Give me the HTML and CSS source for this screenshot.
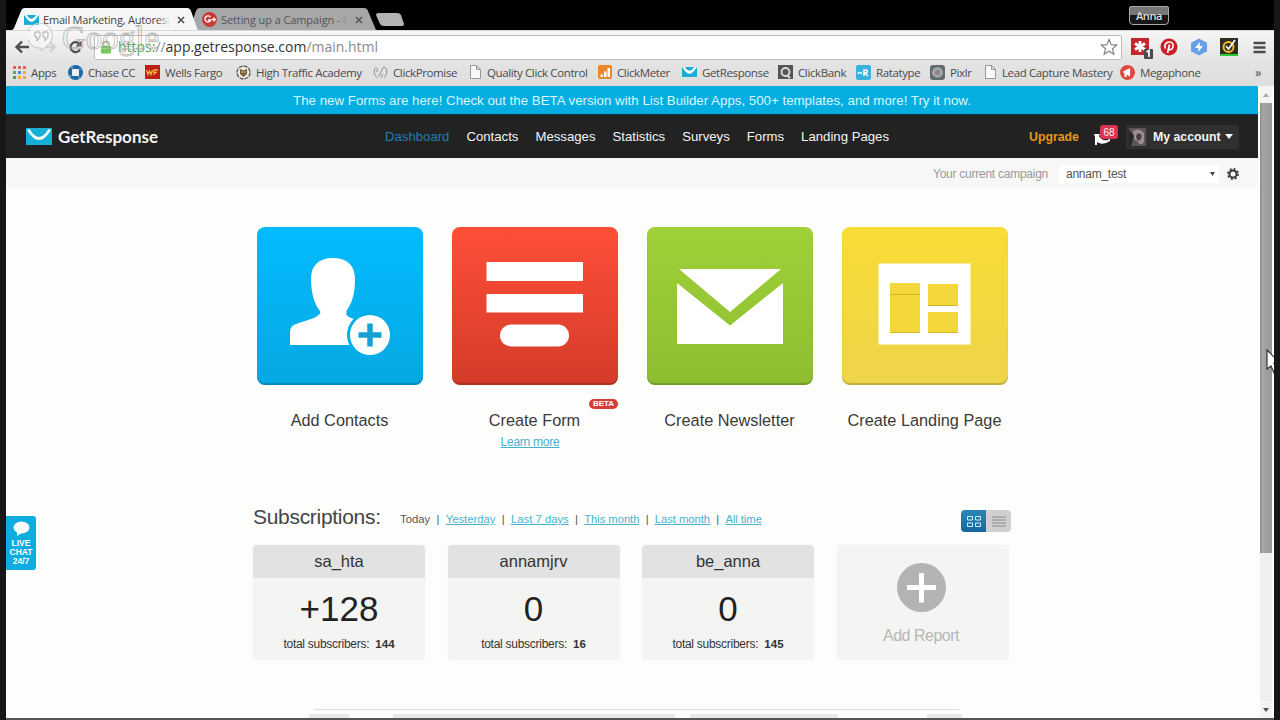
FILE: index.html
```html
<!DOCTYPE html>
<html lang="en">
<head>
<meta charset="utf-8">
<title>GetResponse</title>
<link rel="stylesheet" href="styles.css">
</head>
<body>
<div class="frame">
  <div class="tabstrip">
    <svg class="tab-shapes" width="410" height="30" viewBox="0 0 410 30">
      <path d="M183 30 L190 11 Q191 8 194 8 H358 Q361 8 362 11 L370 30Z" fill="#a5a7a9"/>
      <path d="M0 31 H4 Q7 30 8 28 L15 11 Q16 8 19 8 H181 Q184 8 185 11 L191 28 Q192 31 196 31Z" fill="#f6f6f6"/>
      <path d="M370 15 Q370 13 373 13 H391 Q394 13 395 15 L398 24 Q398 26 396 26 H378 Q375 26 374 24Z" fill="#b2b3b5"/>
    </svg>
    <div class="tab tab-active">
      <svg width="15" height="10" viewBox="0 0 26 17"><rect width="26" height="17" fill="#19acd8"/><path d="M0 0H26L24 2Q13 21 2 2Z" fill="#fff"/><path d="M5 0H21Q13 13 5 0Z" fill="#19acd8"/></svg>
      <span class="tab-title">Email Marketing, Autoresp</span>
      <span class="tab-fade"></span>
      <svg class="tab-x" width="8" height="8" viewBox="0 0 8 8"><path d="M1 1L7 7M7 1L1 7" stroke="#555" stroke-width="1.7"/></svg>
    </div>
    <div class="tab tab-idle">
      <svg width="15" height="15" viewBox="0 0 15 15"><circle cx="7.500" cy="7.500" r="7.500" fill="#c93a34"/><path d="M8.500 5.200A3 3 0 1 0 8.800 8H6.200M10 7.500H14M12 5.500V9.500" fill="none" stroke="#fff" stroke-width="1.400"/></svg>
      <span class="tab-title">Setting up a Campaign - G</span>
      <span class="tab-fade"></span>
      <svg class="tab-x" width="8" height="8" viewBox="0 0 8 8"><path d="M1 1L7 7M7 1L1 7" stroke="#5c5c5c" stroke-width="1.7"/></svg>
    </div>
    <div class="profile">Anna</div>
  </div>

  <div class="toolbar">
    <svg class="nav-icons" width="80" height="30" viewBox="0 0 80 30">
      <path d="M23 16H11M16 10.500L10.500 16L16 21.500" fill="none" stroke="#4c4c4c" stroke-width="2.400"/>
      <path d="M40 16H48M44 11L49 16L44 21" fill="none" stroke="#d2d2d2" stroke-width="2.400"/>
      <path d="M73.500 13A5 5 0 1 0 74 18.500" fill="none" stroke="#4c4c4c" stroke-width="2.200"/><path d="M75.500 9.500V15.500H69.500Z" fill="#4c4c4c"/>
    </svg>
    <div class="omnibox">
      <svg class="lock" width="12" height="14" viewBox="0 0 12 14"><path d="M3 7V4Q3 1.500 6 1.500T9 4V7" fill="none" stroke="#9ab88d" stroke-width="1.500"/><rect x="1" y="6" width="10" height="7.500" rx="1" fill="#77c65a"/><path d="M1.500 8.500H10.500" stroke="#a4e080"/></svg>
      <div class="url"><span class="url-scheme">https:</span><span class="url-dim">//</span>app.getresponse.com<span class="url-dim">/main.html</span></div>
      <svg class="star" width="18" height="18" viewBox="0 0 18 18"><path d="M9 1.500L11.200 6.700L16.800 7.100L12.500 10.800L13.900 16.300L9 13.300L4.100 16.300L5.500 10.800L1.200 7.100L6.800 6.700Z" fill="#fff" stroke="#858585" stroke-width="1.200"/></svg>
    </div>
    <div class="extensions">
      <svg width="22" height="24" viewBox="0 0 22 24"><rect y="3" width="18" height="17" fill="#c1272c"/><path d="M9 6V17M4 8.500L14 14.500M14 8.500L4 14.500" stroke="#fff" stroke-width="2.800"/><rect x="13" y="14" width="9" height="10" rx="1" fill="#4a4a4a"/><path d="M15.500 17L18 15.500V22" stroke="#fff" stroke-width="1.700" fill="none"/></svg>
      <svg width="18" height="18" viewBox="0 0 18 18"><circle cx="9" cy="9" r="8.500" fill="#c91f27"/><path d="M5.500 10.500C3.500 7 6 4 9.300 4S14 6.500 12.800 9.500C11.700 12.300 9 12 8.700 10.400M9.500 6.500L7.500 15" fill="none" stroke="#fff" stroke-width="1.700"/></svg>
      <svg width="18" height="18" viewBox="0 0 18 18"><path d="M9 0.500L17 4.700V13.300L9 17.500L1 13.300V4.700Z" fill="#68a0e8"/><path d="M10 4L5 10H8.500L8 14L13 8H9.500Z" fill="#fff"/></svg>
      <svg width="18" height="18" viewBox="0 0 18 18"><rect width="18" height="16" fill="#302d22"/><rect y="16" width="18" height="2" fill="#2fcb35"/><circle cx="8.500" cy="9" r="5" fill="none" stroke="#f0bb27" stroke-width="2"/><path d="M6 8L8.500 11L15 2" fill="none" stroke="#fff" stroke-width="1.700"/></svg>
      <svg width="13" height="13" viewBox="0 0 13 13"><path d="M.5 2H12.500M.5 6.500H12.500M.5 11H12.500" stroke="#4b4b4b" stroke-width="2.500"/></svg>
    </div>
  </div>

  <div class="bookmarks">
    <div class="bm"><svg width="14" height="13" viewBox="0 0 14 13"><g fill="#df6554"><path d="M1 0h3v3H1zM6 0h3v3H6zM11 0h3v3h-3z"/></g><path d="M1 5h3v3H1z" fill="#68a55b"/><path d="M6 5h3v3H6z" fill="#4b8bd0"/><path d="M11 5h3v3h-3zM6 10h3v3H6zM11 10h3v3h-3z" fill="#e7b133"/><path d="M1 10h3v3H1z" fill="#4c9d57"/></svg><span>Apps</span></div>
    <div class="bm"><svg width="15" height="15" viewBox="0 0 15 15"><circle cx="7.500" cy="7.500" r="7.500" fill="#1c68a8"/><rect x="4" y="4" width="7" height="7" rx="1" fill="#eee"/><path d="M4 0V4M15 4H11M11 15V11M0 11H4" stroke="#a8c4da" stroke-width=".7"/></svg><span>Chase CC</span></div>
    <div class="bm"><svg width="15" height="14" viewBox="0 0 15 14"><rect width="15" height="14" fill="#bd2018"/><path d="M1.500 5L3 9.500L4.500 6L6 9.500L7.500 5M9 10V5H13M9 7.500H12" fill="none" stroke="#efb843" stroke-width="1.300"/></svg><span>Wells Fargo</span></div>
    <div class="bm"><svg width="15" height="15" viewBox="0 0 15 15"><circle cx="7.500" cy="7.500" r="6.500" fill="#ece8dd" stroke="#555" stroke-width="1.300" stroke-dasharray="4 1"/><path d="M4 4L7.500 5.500L11 4V9L7.500 12L4 9Z" fill="#786038"/><path d="M5.500 7H7M8 7H9.500" stroke="#f1dfb1"/></svg><span>High Traffic Academy</span></div>
    <div class="bm"><svg width="15" height="15" viewBox="0 0 16 15"><path d="M4 13Q0 9 1.500 4Q3 1 5 4L4 7M12 13Q16 9 14.500 4Q13 1 11 2L6 12M10 9L9 13" fill="none" stroke="#8b8b8b"/></svg><span>ClickPromise</span></div>
    <div class="bm bm-doc"><svg width="11" height="14" viewBox="0 0 11 14"><path d="M.5 .5H6.500L10.500 4.500V13.500H.5ZM6.500 .5V4.500H10.500" fill="#fafafa" stroke="#989898"/></svg><span>Quality Click Control</span></div>
    <div class="bm"><svg width="14" height="14" viewBox="0 0 14 14"><rect width="14" height="14" rx="2" fill="#ed862d"/><path d="M2.500 12V9.500H5V12ZM6 12V6.500H8.500V12ZM9.500 12V3H12V12Z" fill="#fff"/></svg><span>ClickMeter</span></div>
    <div class="bm"><svg width="15" height="10" viewBox="0 0 26 17"><rect width="26" height="17" fill="#19acd8"/><path d="M0 0H26L24 2Q13 21 2 2Z" fill="#fff"/><path d="M5 0H21Q13 13 5 0Z" fill="#19acd8"/></svg><span>GetResponse</span></div>
    <div class="bm"><svg width="15" height="14" viewBox="0 0 15 14"><rect width="15" height="14" fill="#555"/><circle cx="7.500" cy="7" r="4" fill="none" stroke="#ddd" stroke-width="1.800"/><path d="M9 10L12 13" stroke="#ddd" stroke-width="2"/></svg><span>ClickBank</span></div>
    <div class="bm"><svg width="15" height="15" viewBox="0 0 15 15"><rect width="15" height="15" rx="2" fill="#3ab2df"/><path d="M1.500 8H6M8 11V5H10.500Q13 7.500 9 8L12 11" fill="none" stroke="#fff" stroke-width="1.500"/></svg><span>Ratatype</span></div>
    <div class="bm"><svg width="15" height="15" viewBox="0 0 15 15"><rect width="15" height="15" rx="3" fill="#626b6f"/><circle cx="7.500" cy="7.500" r="4.500" fill="#939b9d" stroke="#c4c8c9" stroke-width="1.200"/><circle cx="7.500" cy="7.500" r="1.800" fill="#9a7676"/></svg><span>Pixlr</span></div>
    <div class="bm bm-doc"><svg width="11" height="14" viewBox="0 0 11 14"><path d="M.5 .5H6.500L10.500 4.500V13.500H.5ZM6.500 .5V4.500H10.500" fill="#fafafa" stroke="#989898"/></svg><span>Lead Capture Mastery</span></div>
    <div class="bm"><svg width="15" height="15" viewBox="0 0 15 15"><circle cx="7.500" cy="7.500" r="7.500" fill="#dd4a40"/><path d="M3 6.500L10 3V11.500L6.500 9.500V12H4.500V9Z" fill="#fff"/></svg><span>Megaphone</span></div>
    <div class="bm-more">»</div>
  </div>

  <div class="viewport">
    <main class="page">
      <div class="banner"><span>The new Forms are here! Check out the BETA version with List Builder Apps, 500+ templates, and more! Try it now.</span></div>
      <header class="header">
        <div class="brand">
          <svg width="26" height="17" viewBox="0 0 26 17"><rect width="26" height="17" fill="#17aed8"/><path d="M1 2Q13 22 25 2L22.500 1Q13 17 3.500 1Z" fill="#fff"/></svg>
          <span>GetResponse</span>
        </div>
        <nav class="nav">
          <a class="nav-on">Dashboard</a><a>Contacts</a><a>Messages</a><a>Statistics</a><a>Surveys</a><a>Forms</a><a>Landing Pages</a>
        </nav>
        <a class="upgrade">Upgrade</a>
        <div class="notify">
          <svg width="18" height="14" viewBox="0 0 18 14"><path d="M0 3H6L5 5Q7 10 14 9L16 7V10Q10 14 5 12L3 11V14H1V6Z" fill="#fff"/></svg>
          <span class="badge">68</span>
        </div>
        <div class="account">
          <svg width="17" height="18" viewBox="0 0 17 18"><rect width="17" height="18" fill="#5a5556"/><path d="M4 3Q10 -1 15 5V14Q11 19 9 14L5 11Z" fill="#9a8f8e"/><path d="M8 6Q14 4 12 11L9 13Q6 9 8 6Z" fill="#4c3b3b"/><path d="M0 2L5 8L2 18H0Z" fill="#272629"/></svg>
          <span>My account</span>
          <svg width="8" height="5" viewBox="0 0 8 5"><path d="M0 0H8L4 5Z" fill="#fff"/></svg>
        </div>
      </header>
      <div class="campaign">
        <span class="campaign-label">Your current campaign</span>
        <div class="select"><span>annam_test</span><svg width="5" height="4" viewBox="0 0 5 4"><path d="M0 0H5L2.500 4Z" fill="#444"/></svg></div>
        <svg class="gear" width="12" height="12" viewBox="0 0 12 12"><circle cx="6" cy="6" r="3.600" fill="none" stroke="#333" stroke-width="2"/><circle cx="6" cy="6" r="5.200" fill="none" stroke="#333" stroke-width="1.500" stroke-dasharray="2 2.080"/></svg>
      </div>

      <section class="actions">
        <div class="action">
          <div class="tile tile-blue"><svg width="166" height="158" viewBox="0 0 166 158"><path d="M33 118V105Q33 99 39 97L57 91Q65 87 63 84C57 77 54 65 54 52C54 39 61 31 76 31S98 39 98 52C98 67 95 76 90 83Q87 88 94 91L103 94V118Z" fill="#fff"/><circle cx="113" cy="108" r="23" fill="#02aeea"/><circle cx="113" cy="108" r="20" fill="#fff"/><path d="M113 96.500V119.500M101.500 108H124.500" stroke="#15a1d3" stroke-width="5.500"/></svg></div>
          <div class="action-name">Add Contacts</div>
        </div>
        <div class="action">
          <div class="tile tile-red"><svg width="166" height="158" viewBox="0 0 166 158"><path d="M34.500 35H131V54H34.500ZM34.500 67H131V85.500H34.500Z" fill="#fff"/><rect x="48" y="97.500" width="69" height="22" rx="11" fill="#fff"/></svg></div>
          <div class="action-name">Create Form</div>
          <span class="beta">BETA</span>
          <a class="learn">Learn more</a>
        </div>
        <div class="action">
          <div class="tile tile-green"><svg width="166" height="158" viewBox="0 0 166 158"><path d="M32 42H134L83 85ZM30 56L83 98.500L136 56V117H30Z" fill="#fff"/></svg></div>
          <div class="action-name">Create Newsletter</div>
        </div>
        <div class="action">
          <div class="tile tile-yellow"><svg width="166" height="158" viewBox="0 0 166 158"><rect x="36.500" y="36.500" width="92" height="81" fill="#fff"/><path d="M48 56H78V106H48ZM86 57H116V78H86ZM86 85H116V106H86Z" fill="#f4d83b"/><path d="M48 67.500H78M48 105.500H78M86 78.500H116M86 105.500H116" stroke="#d2b62a" stroke-width="1"/></svg></div>
          <div class="action-name">Create Landing Page</div>
        </div>
      </section>

      <section class="subs">
        <div class="subs-head">
          <h2>Subscriptions:</h2>
          <div class="ranges"><span>Today</span><i>|</i><a>Yesterday</a><i>|</i><a>Last 7 days</a><i>|</i><a>This month</a><i>|</i><a>Last month</a><i>|</i><a>All time</a></div>
          <div class="toggle">
            <div class="toggle-grid"><svg width="14" height="11" viewBox="0 0 14 11"><path d="M.5 .5H5.500V4H.5ZM8.500 .5H13.500V4H8.500ZM.5 7H5.500V10.500H.5ZM8.500 7H13.500V10.500H8.500Z" fill="none" stroke="#d8edf8"/></svg></div>
            <div class="toggle-list"><svg width="14" height="11" viewBox="0 0 14 11"><path d="M0 1H14M0 4H14M0 7H14M0 10H14" stroke="#888"/></svg></div>
          </div>
        </div>
        <div class="cards">
          <div class="card"><div class="card-name">sa_hta</div><div class="card-num">+128</div><div class="card-total">total subscribers: <b>144</b></div></div>
          <div class="card"><div class="card-name">annamjrv</div><div class="card-num">0</div><div class="card-total">total subscribers: <b>16</b></div></div>
          <div class="card"><div class="card-name">be_anna</div><div class="card-num">0</div><div class="card-total">total subscribers: <b>145</b></div></div>
          <div class="card card-add"><svg width="49" height="49" viewBox="0 0 49 49"><circle cx="24.500" cy="24.500" r="24.500" fill="#b3b3b3"/><path d="M24.500 10V39.500M10 24.500H39" stroke="#fff" stroke-width="5"/></svg><div>Add Report</div></div>
        </div>
      </section>
      <div class="next-panel"><span></span><span></span><span></span><span></span></div>
      <a class="chat"><svg width="17" height="16" viewBox="0 0 17 16"><ellipse cx="8.500" cy="6.500" rx="8" ry="6" fill="#fff"/><path d="M4 10L4 15L10 11Z" fill="#fff"/></svg><span>LIVE<br>CHAT<br>24/7</span></a>
    </main>
    <div class="scrollbar">
      <div class="scroll-btn"><svg width="6" height="4" viewBox="0 0 6 4"><path d="M0 4L3 0L6 4Z" fill="#aaa"/></svg></div>
      <div class="scroll-thumb"></div>
      <div class="scroll-btn scroll-down"><svg width="6" height="4" viewBox="0 0 6 4"><path d="M0 0H6L3 4Z" fill="#505050"/></svg></div>
    </div>
  </div>
  <div class="taskbar"></div>
  <svg class="cursor" width="8" height="26" viewBox="0 0 8 26"><path d="M1 1L14 14H8L11 22L8 24L5 17L1 20Z" fill="#fff" stroke="#333" stroke-width="1.200"/></svg>
  <div class="watermark">
    <svg width="26" height="30" viewBox="0 0 26 30"><path d="M10 25A12.500 12.500 0 1 1 20 22L13 28V25Z" fill="rgba(255,255,255,.35)" stroke="#c2c2c2" stroke-width="1"/><path d="M7 9H12V14L9 18V14H7ZM15 9H20V14L17 18V14H15Z" fill="none" stroke="#aaa"/></svg>
    <span>Google</span>
  </div>
</div>
</body>
</html>
```
FILE: styles.css
```css
* { box-sizing: border-box; }
body { margin: 0; background: #171717; font-family: "Liberation Sans", Arial, sans-serif; }
svg { display: block; flex: none; }
.frame { position: relative; width: 1268px; height: 720px; margin: 0 6px; display: flex; flex-direction: column; overflow: hidden; background: #fdfefc; white-space: nowrap; }

.tabstrip { position: relative; height: 30px; flex: none; display: flex; background: #000; font: 11px "Open Sans", "Noto Sans", sans-serif; color: #444; }
.tab-shapes { position: absolute; left: 0; top: 0; }
.tab { position: relative; display: flex; align-items: center; height: 23px; margin-top: 8px; }
.tab-active { width: 161px; margin-left: 18px; gap: 4px; letter-spacing: -.2px; }
.tab-idle { width: 161px; margin-left: 17px; gap: 4px; color: #555; letter-spacing: -.1px; }
.tab-title { width: 126px; overflow: hidden; }
.tab-fade { position: absolute; right: 15px; width: 12px; height: 20px; background: linear-gradient(90deg, rgba(246,246,246,0), #f6f6f6); }
.tab-idle .tab-fade { background: linear-gradient(90deg, rgba(165,167,169,0), #a5a7a9); }
.tab-x { margin-left: auto; }
.profile { margin: 6px 105px 0 auto; width: 40px; height: 19px; border: 1px solid #aaa; border-radius: 2px 2px 4px 4px; background: linear-gradient(#777 0 45%, #171717 50%); color: #ddd; font-size: 11px; font-weight: 600; line-height: 18px; text-align: center; letter-spacing: -.4px; }

.toolbar { height: 30px; flex: none; display: flex; align-items: center; background: linear-gradient(#f6f6f6, #e4e4e4); border-top: 1px solid #d8d8d8; }
.nav-icons { margin-right: 8px; }
.omnibox { display: flex; align-items: center; width: 1028px; height: 25px; margin-top: 3px; background: #fff; border: 1px solid #bbb; border-radius: 2px; padding: 0 3px 0 5px; }
.url { margin: -2px 0 0 6px; font: 14px "Open Sans", "Noto Sans", sans-serif; color: #333; letter-spacing: -.02px; }
.url-scheme { color: #58a65c; }
.url-dim { color: #8b8b8b; }
.star { margin-left: auto; }
.extensions { display: flex; align-items: center; gap: 12px; margin: 3px 0 0 9px; }
.extensions svg:first-child { margin-right: -5px; }
.extensions svg:last-child { margin-left: 3px; }

.bookmarks { height: 26px; flex: none; display: grid; grid-template-columns: 56px 77px 91px 137px 97px 128px 84px 96px 78px 74px 55px 135px 110px 1fr; padding: 0 0 2px 6px; align-items: center; background: linear-gradient(#e4e4e4, #dedede); font: 11.500px "Open Sans", "Noto Sans", sans-serif; color: #4b4b4b; letter-spacing: -.38px; }
.bm { display: flex; align-items: center; gap: 5px; }
.bm-doc { gap: 6px; }
.bm-more { padding-left: 25px; font-size: 13px; }

.viewport { flex: 1; min-height: 0; display: flex; }
.page { position: relative; width: 1252px; height: 632px; overflow: hidden; display: flex; flex-direction: column; }
.banner { height: 28px; flex: none; display: flex; justify-content: center; align-items: center; background: #05aee1; color: #d9f6ff; font-size: 13.300px; }
.header { height: 44px; flex: none; display: flex; align-items: center; background: #222; color: #f4f4f4; font-size: 13.180px; border-top: 1px solid #123342; }
.brand { width: 379px; display: flex; align-items: center; gap: 6px; padding-left: 20px; font: bold 17px/20px Lato, sans-serif; }
.nav { width: 644px; display: flex; gap: 17px; }
.nav-on { color: #1e7fb4; }
.upgrade { width: 65px; color: #e8961c; font-weight: bold; font-size: 12.300px; }
.notify { position: relative; width: 32px; padding-top: 2px; }
.badge { position: absolute; left: 6px; top: -4px; width: 18px; height: 14px; border-radius: 3px; background: #dc3450; font-size: 10px; line-height: 15px; text-align: center; }
.account { width: 113px; height: 24px; display: flex; align-items: center; gap: 4px; padding-left: 3px; background: #303030; border-radius: 2px; font-weight: bold; font-size: 12.300px; }
.account svg:first-child { margin-right: 3px; }
.campaign { height: 31px; flex: none; display: flex; align-items: center; padding-left: 927px; background: #f7f8f6; color: #555; font-size: 12px; letter-spacing: -.25px; }
.campaign-label { width: 126px; color: #9a9a9a; }
.select { width: 160px; height: 18px; display: flex; align-items: center; justify-content: space-between; padding: 0 4px 0 7px; background: #fff; }
.gear { margin-left: 8px; }

.actions { display: flex; gap: 29px; padding: 38px 0 0 251px; height: 311px; flex: none; }
.action { position: relative; width: 166px; text-align: center; }
.tile { height: 158px; border-radius: 8px; overflow: hidden; box-shadow: inset 0 -2px 1px rgba(0,0,0,.18); }
.tile-blue { background: linear-gradient(#02bbff, #05a8e2); }
.tile-red { background: linear-gradient(#ff4e38, #d33c29); }
.tile-green { background: linear-gradient(#9fd038, #8ebd31); }
.tile-yellow { background: linear-gradient(#f8dc36, #eed44a); }
.action-name { margin: 26px 1px 0 0; height: 20px; line-height: 19px; font-size: 16.300px; color: #3a3a3a; }
.beta { position: absolute; left: 137px; top: 172px; width: 29px; height: 10px; border-radius: 5px; background: #d33f36; color: #fff; font-size: 8px; font-weight: bold; line-height: 10px; }
.learn { display: block; margin: 4px 10px 0 0; font-size: 12px; letter-spacing: -.25px; line-height: 14px; color: #4bacd2; text-decoration: underline; }

.subs { padding-left: 247px; flex: none; }
.subs-head { width: 758px; height: 45px; display: flex; align-items: flex-start; padding-top: 5px; }
h2 { width: 147px; margin: 0; font-size: 21px; letter-spacing: -.3px; font-weight: normal; line-height: 24px; color: #444; }
.ranges { display: flex; padding-top: 5px; font-size: 11.300px; line-height: 18px; color: #555; }
.ranges i { width: 15.500px; text-align: center; font-style: normal; }
.ranges a { color: #4bb2d0; text-decoration: underline; }
.ranges a:nth-of-type(n+3) { letter-spacing: -.08px; }
.toggle { margin-left: auto; margin-top: 5px; width: 50px; height: 22px; display: flex; border-radius: 4px; overflow: hidden; }
.toggle div { flex: 1; display: flex; align-items: center; justify-content: center; }
.toggle-grid { background: linear-gradient(#2d86b6, #14679b); }
.toggle-list { background: #d0d0d0; }
.cards { display: flex; gap: 22.500px; }
.card { width: 172px; height: 115px; background: #f4f5f3; border-radius: 4px; text-align: center; color: #333; box-shadow: 0 0 3px #f4f5f3; }
.card-name { height: 33px; line-height: 32px; background: #e2e2e2; border-radius: 4px 4px 0 0; font-size: 16.500px; }
.card-num { height: 58px; line-height: 62px; font-size: 35px; color: #222; }
.card-total { font-size: 12px; letter-spacing: -.27px; line-height: 17px; }
.card-total b { margin-left: 3px; letter-spacing: 0; font-size: 11.500px; }
.card-add { display: flex; flex-direction: column; align-items: center; padding-top: 18px; padding-right: 3px; color: #b6b6b6; font-size: 16px; letter-spacing: -.5px; }
.card-add div { margin-top: 14px; line-height: 20px; }
.next-panel { width: 645px; height: 9px; flex: none; margin: 49px 0 0 308px; display: flex; gap: 15px; border-top: 1px solid #ddd; padding-top: 4px; }
.next-panel span { height: 4px; background: #e8e8e8; flex: none; }
.next-panel span:first-child { width: 40px; margin-left: -5px; }
.next-panel span:nth-child(2) { width: 282px; margin-left: 29px; }
.next-panel span:nth-child(3) { width: 148px; }
.next-panel span:nth-child(4) { width: 35px; margin-left: 74px; }
.chat { position: absolute; left: 0; top: 430px; width: 30px; height: 54px; padding-top: 5px; border-radius: 0 3px 3px 0; background: #0dace0; color: #fff; font-size: 8.500px; font-weight: bold; line-height: 9px; text-align: center; }
.chat svg { margin: 0 auto 2px; }

.scrollbar { width: 12px; margin-left: 2px; height: 632px; display: flex; flex-direction: column; background: #efefee; }
.scroll-btn { height: 17px; display: flex; align-items: center; justify-content: center; background: #f4f4f4; }
.scroll-thumb { height: 450px; background: linear-gradient(90deg, #888, #a5a5a5 20%, #999); }
.scroll-down { margin-top: auto; }
.taskbar { height: 2px; flex: none; background: #555; }
.cursor { position: absolute; left: 1260px; top: 349px; }
.watermark { position: absolute; left: 22px; top: 23px; display: flex; gap: 8px; align-items: center; }
.watermark span { font: 33px/30px "Liberation Serif", serif; color: transparent; -webkit-text-stroke: .8px rgba(165,165,165,.85); }
```
